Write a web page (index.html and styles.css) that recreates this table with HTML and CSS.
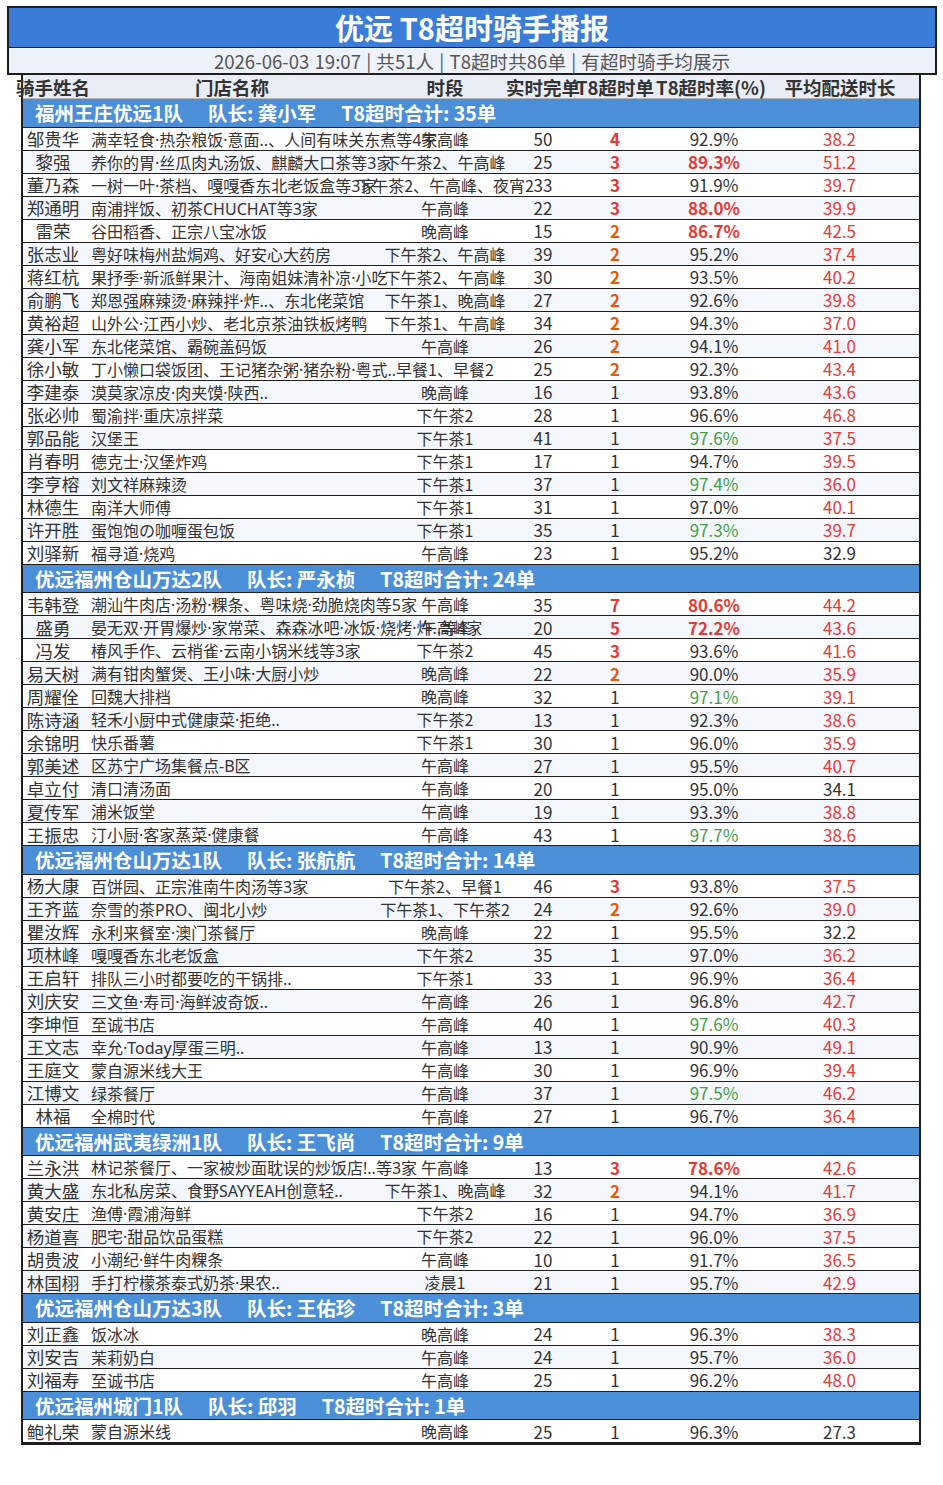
FILE: index.html
```html
<!DOCTYPE html>
<html lang="zh-CN">
<head>
<meta charset="utf-8">
<title>优远 T8超时骑手播报</title>
<link rel="stylesheet" href="styles.css">
</head>
<body>
<div class="title-box">
  <div class="title">优远 T8超时骑手播报</div>
  <div class="subtitle">2026-06-03 19:07 | 共51人 | T8超时共86单 | 有超时骑手均展示</div>
</div>
<div class="table">
  <div class="head">
    <div class="c name">骑手姓名</div>
    <div class="c store-h">门店名称</div>
    <div class="c time">时段</div>
    <div class="c done">实时完单</div>
    <div class="c t8">T8超时单</div>
    <div class="c rate rate-h">T8超时率(%)</div>
    <div class="c avg-h">平均配送时长</div>
  </div>

  <div class="group"><span>福州王庄优远1队</span><span>队长: 龚小军</span><span>T8超时合计: 35单</span></div>
  <div class="row"><div class="c name">邹贵华</div><div class="c store">满幸轻食·热杂粮饭·意面..、人间有味关东煮等4家</div><div class="c time">午高峰</div><div class="c done">50</div><div class="c t8 hot">4</div><div class="c rate">92.9%</div><div class="c avg late">38.2</div></div>
  <div class="row alt"><div class="c name">黎强</div><div class="c store">养你的胃·丝瓜肉丸汤饭、麒麟大口茶等3家</div><div class="c time">下午茶2、午高峰</div><div class="c done">25</div><div class="c t8 hot">3</div><div class="c rate bad">89.3%</div><div class="c avg late">51.2</div></div>
  <div class="row"><div class="c name">董乃森</div><div class="c store">一树一叶·茶档、嘎嘎香东北老饭盒等3家</div><div class="c time">下午茶2、午高峰、夜宵2</div><div class="c done">33</div><div class="c t8 hot">3</div><div class="c rate">91.9%</div><div class="c avg late">39.7</div></div>
  <div class="row alt"><div class="c name">郑通明</div><div class="c store">南浦拌饭、初茶CHUCHAT等3家</div><div class="c time">午高峰</div><div class="c done">22</div><div class="c t8 hot">3</div><div class="c rate bad">88.0%</div><div class="c avg late">39.9</div></div>
  <div class="row"><div class="c name">雷荣</div><div class="c store">谷田稻香、正宗八宝冰饭</div><div class="c time">晚高峰</div><div class="c done">15</div><div class="c t8 warm">2</div><div class="c rate bad">86.7%</div><div class="c avg late">42.5</div></div>
  <div class="row alt"><div class="c name">张志业</div><div class="c store">粤好味梅州盐焗鸡、好安心大药房</div><div class="c time">下午茶2、午高峰</div><div class="c done">39</div><div class="c t8 warm">2</div><div class="c rate">95.2%</div><div class="c avg late">37.4</div></div>
  <div class="row"><div class="c name">蒋红杭</div><div class="c store">果抒季·新派鲜果汁、海南姐妹清补凉·小吃</div><div class="c time">下午茶2、午高峰</div><div class="c done">30</div><div class="c t8 warm">2</div><div class="c rate">93.5%</div><div class="c avg late">40.2</div></div>
  <div class="row alt"><div class="c name">俞鹏飞</div><div class="c store">郑恩强麻辣烫·麻辣拌·炸..、东北佬菜馆</div><div class="c time">下午茶1、晚高峰</div><div class="c done">27</div><div class="c t8 warm">2</div><div class="c rate">92.6%</div><div class="c avg late">39.8</div></div>
  <div class="row"><div class="c name">黄裕超</div><div class="c store">山外公·江西小炒、老北京茶油铁板烤鸭</div><div class="c time">下午茶1、午高峰</div><div class="c done">34</div><div class="c t8 warm">2</div><div class="c rate">94.3%</div><div class="c avg late">37.0</div></div>
  <div class="row alt"><div class="c name">龚小军</div><div class="c store">东北佬菜馆、霸碗盖码饭</div><div class="c time">午高峰</div><div class="c done">26</div><div class="c t8 warm">2</div><div class="c rate">94.1%</div><div class="c avg late">41.0</div></div>
  <div class="row"><div class="c name">徐小敏</div><div class="c store">丁小懒口袋饭团、王记猪杂粥·猪杂粉·粤式..</div><div class="c time">早餐1、早餐2</div><div class="c done">25</div><div class="c t8 warm">2</div><div class="c rate">92.3%</div><div class="c avg late">43.4</div></div>
  <div class="row alt"><div class="c name">李建泰</div><div class="c store">漠莫家凉皮·肉夹馍·陕西..</div><div class="c time">晚高峰</div><div class="c done">16</div><div class="c t8">1</div><div class="c rate">93.8%</div><div class="c avg late">43.6</div></div>
  <div class="row"><div class="c name">张必帅</div><div class="c store">蜀渝拌·重庆凉拌菜</div><div class="c time">下午茶2</div><div class="c done">28</div><div class="c t8">1</div><div class="c rate">96.6%</div><div class="c avg late">46.8</div></div>
  <div class="row alt"><div class="c name">郭品能</div><div class="c store">汉堡王</div><div class="c time">下午茶1</div><div class="c done">41</div><div class="c t8">1</div><div class="c rate good">97.6%</div><div class="c avg late">37.5</div></div>
  <div class="row"><div class="c name">肖春明</div><div class="c store">德克士·汉堡炸鸡</div><div class="c time">下午茶1</div><div class="c done">17</div><div class="c t8">1</div><div class="c rate">94.7%</div><div class="c avg late">39.5</div></div>
  <div class="row alt"><div class="c name">李亨榕</div><div class="c store">刘文祥麻辣烫</div><div class="c time">下午茶1</div><div class="c done">37</div><div class="c t8">1</div><div class="c rate good">97.4%</div><div class="c avg late">36.0</div></div>
  <div class="row"><div class="c name">林德生</div><div class="c store">南洋大师傅</div><div class="c time">下午茶1</div><div class="c done">31</div><div class="c t8">1</div><div class="c rate">97.0%</div><div class="c avg late">40.1</div></div>
  <div class="row alt"><div class="c name">许开胜</div><div class="c store">蛋饱饱の咖喱蛋包饭</div><div class="c time">下午茶1</div><div class="c done">35</div><div class="c t8">1</div><div class="c rate good">97.3%</div><div class="c avg late">39.7</div></div>
  <div class="row"><div class="c name">刘驿新</div><div class="c store">福寻道·烧鸡</div><div class="c time">午高峰</div><div class="c done">23</div><div class="c t8">1</div><div class="c rate">95.2%</div><div class="c avg">32.9</div></div>

  <div class="group"><span>优远福州仓山万达2队</span><span>队长: 严永桢</span><span>T8超时合计: 24单</span></div>
  <div class="row"><div class="c name">韦韩登</div><div class="c store">潮汕牛肉店·汤粉·粿条、粤味烧·劲脆烧肉等5家</div><div class="c time">午高峰</div><div class="c done">35</div><div class="c t8 hot">7</div><div class="c rate bad">80.6%</div><div class="c avg late">44.2</div></div>
  <div class="row alt"><div class="c name">盛勇</div><div class="c store">晏无双·开胃爆炒·家常菜、森森冰吧·冰饭·烧烤·炸..等4家</div><div class="c time">午高峰</div><div class="c done">20</div><div class="c t8 hot">5</div><div class="c rate bad">72.2%</div><div class="c avg late">43.6</div></div>
  <div class="row"><div class="c name">冯发</div><div class="c store">椿风手作、云梢雀·云南小锅米线等3家</div><div class="c time">下午茶2</div><div class="c done">45</div><div class="c t8 hot">3</div><div class="c rate">93.6%</div><div class="c avg late">41.6</div></div>
  <div class="row alt"><div class="c name">易天树</div><div class="c store">满有钳肉蟹煲、王小味·大厨小炒</div><div class="c time">晚高峰</div><div class="c done">22</div><div class="c t8 warm">2</div><div class="c rate">90.0%</div><div class="c avg late">35.9</div></div>
  <div class="row"><div class="c name">周耀佺</div><div class="c store">回魏大排档</div><div class="c time">晚高峰</div><div class="c done">32</div><div class="c t8">1</div><div class="c rate good">97.1%</div><div class="c avg late">39.1</div></div>
  <div class="row alt"><div class="c name">陈诗涵</div><div class="c store">轻禾小厨中式健康菜·拒绝..</div><div class="c time">下午茶2</div><div class="c done">13</div><div class="c t8">1</div><div class="c rate">92.3%</div><div class="c avg late">38.6</div></div>
  <div class="row"><div class="c name">余锦明</div><div class="c store">快乐番薯</div><div class="c time">下午茶1</div><div class="c done">30</div><div class="c t8">1</div><div class="c rate">96.0%</div><div class="c avg late">35.9</div></div>
  <div class="row alt"><div class="c name">郭美述</div><div class="c store">区苏宁广场集餐点-B区</div><div class="c time">午高峰</div><div class="c done">27</div><div class="c t8">1</div><div class="c rate">95.5%</div><div class="c avg late">40.7</div></div>
  <div class="row"><div class="c name">卓立付</div><div class="c store">清口清汤面</div><div class="c time">午高峰</div><div class="c done">20</div><div class="c t8">1</div><div class="c rate">95.0%</div><div class="c avg">34.1</div></div>
  <div class="row alt"><div class="c name">夏传军</div><div class="c store">浦米饭堂</div><div class="c time">午高峰</div><div class="c done">19</div><div class="c t8">1</div><div class="c rate">93.3%</div><div class="c avg late">38.8</div></div>
  <div class="row"><div class="c name">王振忠</div><div class="c store">汀小厨·客家蒸菜·健康餐</div><div class="c time">午高峰</div><div class="c done">43</div><div class="c t8">1</div><div class="c rate good">97.7%</div><div class="c avg late">38.6</div></div>

  <div class="group"><span>优远福州仓山万达1队</span><span>队长: 张航航</span><span>T8超时合计: 14单</span></div>
  <div class="row"><div class="c name">杨大康</div><div class="c store">百饼园、正宗淮南牛肉汤等3家</div><div class="c time">下午茶2、早餐1</div><div class="c done">46</div><div class="c t8 hot">3</div><div class="c rate">93.8%</div><div class="c avg late">37.5</div></div>
  <div class="row alt"><div class="c name">王齐蓝</div><div class="c store">奈雪的茶PRO、闽北小炒</div><div class="c time">下午茶1、下午茶2</div><div class="c done">24</div><div class="c t8 warm">2</div><div class="c rate">92.6%</div><div class="c avg late">39.0</div></div>
  <div class="row"><div class="c name">瞿汝辉</div><div class="c store">永利来餐室·澳门茶餐厅</div><div class="c time">晚高峰</div><div class="c done">22</div><div class="c t8">1</div><div class="c rate">95.5%</div><div class="c avg">32.2</div></div>
  <div class="row alt"><div class="c name">项林峰</div><div class="c store">嘎嘎香东北老饭盒</div><div class="c time">下午茶2</div><div class="c done">35</div><div class="c t8">1</div><div class="c rate">97.0%</div><div class="c avg late">36.2</div></div>
  <div class="row"><div class="c name">王启轩</div><div class="c store">排队三小时都要吃的干锅排..</div><div class="c time">下午茶1</div><div class="c done">33</div><div class="c t8">1</div><div class="c rate">96.9%</div><div class="c avg late">36.4</div></div>
  <div class="row alt"><div class="c name">刘庆安</div><div class="c store">三文鱼·寿司·海鲜波奇饭..</div><div class="c time">午高峰</div><div class="c done">26</div><div class="c t8">1</div><div class="c rate">96.8%</div><div class="c avg late">42.7</div></div>
  <div class="row"><div class="c name">李坤恒</div><div class="c store">至诚书店</div><div class="c time">午高峰</div><div class="c done">40</div><div class="c t8">1</div><div class="c rate good">97.6%</div><div class="c avg late">40.3</div></div>
  <div class="row alt"><div class="c name">王文志</div><div class="c store">幸允·Today厚蛋三明..</div><div class="c time">午高峰</div><div class="c done">13</div><div class="c t8">1</div><div class="c rate">90.9%</div><div class="c avg late">49.1</div></div>
  <div class="row"><div class="c name">王庭文</div><div class="c store">蒙自源米线大王</div><div class="c time">午高峰</div><div class="c done">30</div><div class="c t8">1</div><div class="c rate">96.9%</div><div class="c avg late">39.4</div></div>
  <div class="row alt"><div class="c name">江博文</div><div class="c store">绿茶餐厅</div><div class="c time">午高峰</div><div class="c done">37</div><div class="c t8">1</div><div class="c rate good">97.5%</div><div class="c avg late">46.2</div></div>
  <div class="row"><div class="c name">林福</div><div class="c store">全棉时代</div><div class="c time">午高峰</div><div class="c done">27</div><div class="c t8">1</div><div class="c rate">96.7%</div><div class="c avg late">36.4</div></div>

  <div class="group"><span>优远福州武夷绿洲1队</span><span>队长: 王飞尚</span><span>T8超时合计: 9单</span></div>
  <div class="row"><div class="c name">兰永洪</div><div class="c store">林记茶餐厅、一家被炒面耽误的炒饭店!..等3家</div><div class="c time">午高峰</div><div class="c done">13</div><div class="c t8 hot">3</div><div class="c rate bad">78.6%</div><div class="c avg late">42.6</div></div>
  <div class="row alt"><div class="c name">黄大盛</div><div class="c store">东北私房菜、食野SAYYEAH创意轻..</div><div class="c time">下午茶1、晚高峰</div><div class="c done">32</div><div class="c t8 warm">2</div><div class="c rate">94.1%</div><div class="c avg late">41.7</div></div>
  <div class="row"><div class="c name">黄安庄</div><div class="c store">渔傅·霞浦海鲜</div><div class="c time">下午茶2</div><div class="c done">16</div><div class="c t8">1</div><div class="c rate">94.7%</div><div class="c avg late">36.9</div></div>
  <div class="row alt"><div class="c name">杨道喜</div><div class="c store">肥宅·甜品饮品蛋糕</div><div class="c time">下午茶2</div><div class="c done">22</div><div class="c t8">1</div><div class="c rate">96.0%</div><div class="c avg late">37.5</div></div>
  <div class="row"><div class="c name">胡贵波</div><div class="c store">小潮纪·鲜牛肉粿条</div><div class="c time">午高峰</div><div class="c done">10</div><div class="c t8">1</div><div class="c rate">91.7%</div><div class="c avg late">36.5</div></div>
  <div class="row alt"><div class="c name">林国栩</div><div class="c store">手打柠檬茶泰式奶茶·果农..</div><div class="c time">凌晨1</div><div class="c done">21</div><div class="c t8">1</div><div class="c rate">95.7%</div><div class="c avg late">42.9</div></div>

  <div class="group"><span>优远福州仓山万达3队</span><span>队长: 王佑珍</span><span>T8超时合计: 3单</span></div>
  <div class="row"><div class="c name">刘正鑫</div><div class="c store">饭冰冰</div><div class="c time">晚高峰</div><div class="c done">24</div><div class="c t8">1</div><div class="c rate">96.3%</div><div class="c avg late">38.3</div></div>
  <div class="row alt"><div class="c name">刘安吉</div><div class="c store">茉莉奶白</div><div class="c time">午高峰</div><div class="c done">24</div><div class="c t8">1</div><div class="c rate">95.7%</div><div class="c avg late">36.0</div></div>
  <div class="row"><div class="c name">刘福寿</div><div class="c store">至诚书店</div><div class="c time">午高峰</div><div class="c done">25</div><div class="c t8">1</div><div class="c rate">96.2%</div><div class="c avg late">48.0</div></div>

  <div class="group"><span>优远福州城门1队</span><span>队长: 邱羽</span><span>T8超时合计: 1单</span></div>
  <div class="row"><div class="c name">鲍礼荣</div><div class="c store">蒙自源米线</div><div class="c time">晚高峰</div><div class="c done">25</div><div class="c t8">1</div><div class="c rate">96.3%</div><div class="c avg">27.3</div></div>
</div>
</body>
</html>
```

FILE: styles.css
```css
* { box-sizing: border-box; }

html, body {
  margin: 0;
  padding: 0;
  background: #ffffff;
}

body {
  font-family: "Noto Sans CJK SC", "Noto Sans", sans-serif;
  color: #333333;
  padding-top: 6px;
}

.title-box {
  margin-left: 7px;
  width: 930px;
  border: 2px solid #1e1e1e;
}

.title {
  height: 39.5px;
  background: #3a7dd8;
  color: #ffffff;
  font-size: 29px;
  font-weight: 700;
  display: flex;
  align-items: center;
  justify-content: center;
  border-bottom: 1.5px solid #1e1e1e;
  white-space: nowrap;
}

.subtitle {
  height: 25.7px;
  background: #eef2fa;
  color: #555555;
  font-size: 18.6px;
  word-spacing: 1px;
  display: flex;
  align-items: center;
  justify-content: center;
  white-space: nowrap;
}

.table {
  margin-left: 21px;
  width: 900px;
  border-left: 2px solid #1e1e1e;
  border-right: 2px solid #1e1e1e;
  border-bottom: 2px solid #1e1e1e;
}

.head {
  display: flex;
  height: 24px;
  background: #e8edf6;
  border-bottom: 1.4px solid #b4b4b4;
  font-size: 18.5px;
  font-weight: 700;
  color: #333333;
}

.group {
  display: flex;
  gap: 25px;
  align-items: center;
  height: 28.5px;
  padding-left: 12px;
  background: #4a8fd8;
  color: #ffffff;
  font-size: 19.5px;
  font-weight: 700;
  border-bottom: 1.5px solid #1e1e1e;
  white-space: nowrap;
}

.row {
  display: flex;
  height: 23px;
  background: #ffffff;
  border-bottom: 1.5px solid #1e1e1e;
  font-size: 17px;
}

.row.alt {
  background: #f4f7fc;
}

.c {
  display: flex;
  align-items: center;
  justify-content: center;
  white-space: nowrap;
  flex: none;
}

.name { width: 60px; }
.row .name { font-size: 17.5px; }

.store {
  width: 298px;
  justify-content: flex-start;
  padding-left: 8px;
  font-family: "Noto Sans", "Noto Sans CJK SC", sans-serif;
  font-size: 16px;
}

.store-h { width: 298px; }

.time {
  width: 128px;
}
.row .time { font-size: 16px; }

.done { width: 68px; }
.t8 { width: 76px; }
.rate { width: 122px; }
.rate-h { padding-right: 6px; }

.avg {
  width: 144px;
  justify-content: flex-end;
  padding-right: 63px;
}

.avg-h {
  width: 144px;
  padding-right: 14px;
}

.hot { color: #e53935; font-weight: 700; }
.warm { color: #e8590c; font-weight: 700; }
.bad { color: #e53935; font-weight: 700; }
.good { color: #43a047; }
.late { color: #e53935; }
```
